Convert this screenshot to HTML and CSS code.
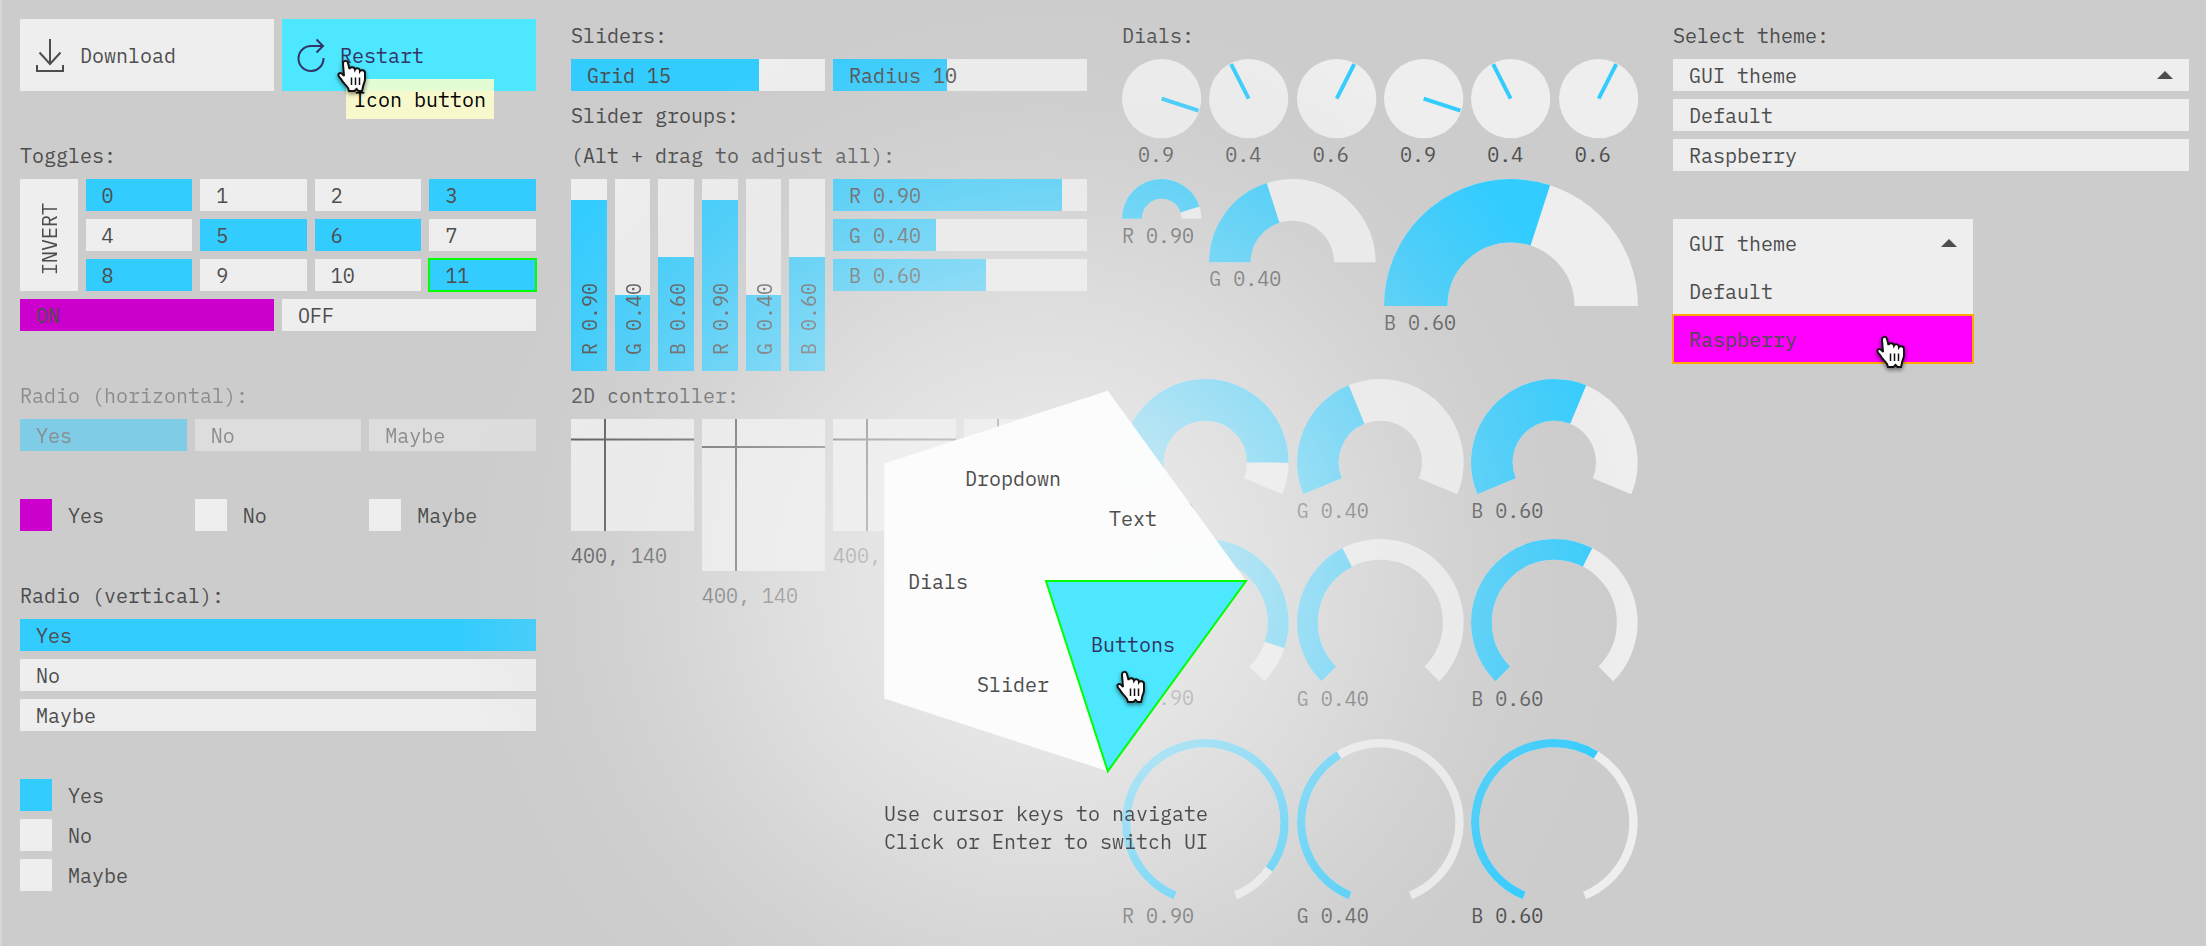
FILE: index.html
```html
<!DOCTYPE html>
<html lang="en">
<head>
<meta charset="utf-8">
<title>GUI components</title>
<link rel="stylesheet" href="styles.css">
</head>
<body>
<svg class="defs" aria-hidden="true">
  <defs>
    <path id="arc180" pathLength="100" stroke-width="50" d="M25 100A75 75 0 0 1 175 100"/>
    <path id="arc225" pathLength="100" stroke-width="50" d="M30.71 128.7A75 75 0 1 1 169.29 128.7"/>
    <path id="arc270" pathLength="100" stroke-width="25" d="M38.13 161.87A87.5 87.5 0 1 1 161.87 161.87"/>
    <path id="arc315" pathLength="100" stroke-width="10" d="M63.65 187.77A95 95 0 1 1 136.35 187.77"/>
    <symbol id="hand" viewBox="0 0 32 36">
      <path d="M8 17L7 5C7 1 11 1 12 4L13.5 10C14 7.5 18.5 7.5 19 10.5C20 8.5 24 9 24 12C25 10.5 29 11 29 14V20C29 24 27 25 27 28L26 32H22.5L20.5 30L18.5 32H13L12 29C10 26 7 24 5 20C3 18 2 16 2.5 15C4 12.5 7 15 8 17Z" fill="#fff" stroke="#111" stroke-width="2"/>
      <path d="M15.5 18.5V26M19.5 18.5V26M23.5 18.5V26" stroke="#111" stroke-width="1.5"/>
    </symbol>
  </defs>
</svg>

<main class="columns">
  <div class="column">
    <section class="stack cols-2">
      <button class="icon-button">
        <svg class="icon" viewBox="0 0 28 32"><path d="M14 0V25M3.5 13.5L14 25L24.5 13.5M1 26V32H27V26"/></svg>
        <span class="text">Download</span>
      </button>
      <div class="hovered">
        <button class="icon-button active">
          <svg class="icon narrow" viewBox="0 0 26 32"><path d="M25.5 19A12.5 12.5 0 1 1 13 7H25M18.5 .5L25 7L18.5 13.5"/></svg>
          <span class="text">Restart</span>
        </button>
        <div class="tooltip" role="tooltip">Icon button</div>
        <svg class="cursor on-button" aria-hidden="true"><use href="#hand"/></svg>
      </div>
    </section>

    <section class="stack">
      <h2 class="text">Toggles:</h2>
      <div class="toggles">
        <button class="invert"><span class="vertical">INVERT</span></button>
        <div class="stack cols-4 toggle-grid">
          <label class="bar"><input type="checkbox" checked><span class="text">0</span></label>
          <label class="bar"><input type="checkbox"><span class="text">1</span></label>
          <label class="bar"><input type="checkbox"><span class="text">2</span></label>
          <label class="bar"><input type="checkbox" checked><span class="text">3</span></label>
          <label class="bar"><input type="checkbox"><span class="text">4</span></label>
          <label class="bar"><input type="checkbox" checked><span class="text">5</span></label>
          <label class="bar"><input type="checkbox" checked><span class="text">6</span></label>
          <label class="bar"><input type="checkbox"><span class="text">7</span></label>
          <label class="bar"><input type="checkbox" checked><span class="text">8</span></label>
          <label class="bar"><input type="checkbox"><span class="text">9</span></label>
          <label class="bar"><input type="checkbox"><span class="text">10</span></label>
          <label class="bar focused"><input type="checkbox" checked><span class="text">11</span></label>
        </div>
      </div>
      <div class="stack cols-2">
        <label class="bar custom"><input type="checkbox" checked><span class="text">ON</span></label>
        <label class="bar custom"><input type="checkbox"><span class="text">OFF</span></label>
      </div>
    </section>

    <section class="stack disabled">
      <h2 class="text">Radio (horizontal):</h2>
      <div class="stack cols-3">
        <label class="bar"><input type="radio" name="horizontal" disabled checked><span class="text">Yes</span></label>
        <label class="bar"><input type="radio" name="horizontal" disabled><span class="text">No</span></label>
        <label class="bar"><input type="radio" name="horizontal" disabled><span class="text">Maybe</span></label>
      </div>
    </section>

    <section class="stack cols-3">
      <label class="square custom"><input type="radio" name="squares" checked><span class="text">Yes</span></label>
      <label class="square custom"><input type="radio" name="squares"><span class="text">No</span></label>
      <label class="square custom"><input type="radio" name="squares"><span class="text">Maybe</span></label>
    </section>

    <section class="stack">
      <h2 class="text">Radio (vertical):</h2>
      <label class="bar"><input type="radio" name="vertical" checked><span class="text">Yes</span></label>
      <label class="bar"><input type="radio" name="vertical"><span class="text">No</span></label>
      <label class="bar"><input type="radio" name="vertical"><span class="text">Maybe</span></label>
    </section>

    <section class="stack">
      <label class="square"><input type="radio" name="square-list" checked><span class="text">Yes</span></label>
      <label class="square"><input type="radio" name="square-list"><span class="text">No</span></label>
      <label class="square"><input type="radio" name="square-list"><span class="text">Maybe</span></label>
    </section>
  </div>

  <div class="column">
    <section class="stack">
      <h2 class="text">Sliders:</h2>
      <div class="stack cols-2">
        <label class="bar"><input type="range" style="--value:74%"><span class="text">Grid 15</span></label>
        <label class="bar"><input type="range" style="--value:45%"><span class="text">Radius 10</span></label>
      </div>
      <h2 class="text">Slider groups:</h2>
      <p class="text">(Alt + drag to adjust all):</p>
      <div class="stack cols-2">
        <div class="sliders-vertical">
          <label class="bar upright"><input type="range" style="--value:89%"><span class="vertical">R 0.90</span></label>
          <label class="bar upright"><input type="range" style="--value:39.6%"><span class="vertical">G 0.40</span></label>
          <label class="bar upright"><input type="range" style="--value:59.4%"><span class="vertical">B 0.60</span></label>
          <label class="bar upright"><input type="range" style="--value:89%"><span class="vertical">R 0.90</span></label>
          <label class="bar upright"><input type="range" style="--value:39.6%"><span class="vertical">G 0.40</span></label>
          <label class="bar upright"><input type="range" style="--value:59.4%"><span class="vertical">B 0.60</span></label>
        </div>
        <div class="stack">
          <label class="bar"><input type="range" style="--value:90%"><span class="text">R 0.90</span></label>
          <label class="bar"><input type="range" style="--value:40.5%"><span class="text">G 0.40</span></label>
          <label class="bar"><input type="range" style="--value:60.3%"><span class="text">B 0.60</span></label>
        </div>
      </div>
      <h2 class="text">2D controller:</h2>
      <div class="stack cols-4">
        <div class="stack"><svg class="pad"><path d="M0 20.5H999M34 0V999"/></svg><span class="text">400, 140</span></div>
        <div class="stack"><svg class="pad tall"><path d="M0 28H999M34 0V999"/></svg><span class="text">400, 140</span></div>
        <div class="stack"><svg class="pad"><path d="M0 20.5H999M34 0V999"/></svg><span class="text">400, 140</span></div>
        <div class="stack"><svg class="pad"><path d="M0 20.5H999M34 0V999"/></svg></div>
      </div>
    </section>
  </div>

  <div class="column">
    <section class="stack">
      <h2 class="text">Dials:</h2>
      <div class="stack cols-6 row-knobs">
        <label class="dial knob"><svg viewBox="0 0 80 80"><circle cx="40" cy="40" r="40"/><path d="M40 40H79" transform="rotate(18 40 40)"/></svg><input type="range"><span class="text">0.9</span></label>
        <label class="dial knob"><svg viewBox="0 0 80 80"><circle cx="40" cy="40" r="40"/><path d="M40 40H79" transform="rotate(243 40 40)"/></svg><input type="range"><span class="text">0.4</span></label>
        <label class="dial knob"><svg viewBox="0 0 80 80"><circle cx="40" cy="40" r="40"/><path d="M40 40H79" transform="rotate(297 40 40)"/></svg><input type="range"><span class="text">0.6</span></label>
        <label class="dial knob"><svg viewBox="0 0 80 80"><circle cx="40" cy="40" r="40"/><path d="M40 40H79" transform="rotate(18 40 40)"/></svg><input type="range"><span class="text">0.9</span></label>
        <label class="dial knob"><svg viewBox="0 0 80 80"><circle cx="40" cy="40" r="40"/><path d="M40 40H79" transform="rotate(243 40 40)"/></svg><input type="range"><span class="text">0.4</span></label>
        <label class="dial knob"><svg viewBox="0 0 80 80"><circle cx="40" cy="40" r="40"/><path d="M40 40H79" transform="rotate(297 40 40)"/></svg><input type="range"><span class="text">0.6</span></label>
      </div>
      <div class="stack cols-6 row-tall">
        <label class="dial"><svg viewBox="0 0 200 100"><use class="track" href="#arc180"/><use class="level" href="#arc180" style="stroke-dasharray:90 200"/></svg><input type="range"><span class="text">R 0.90</span></label>
        <label class="dial span-2"><svg viewBox="0 0 200 100"><use class="track" href="#arc180"/><use class="level" href="#arc180" style="stroke-dasharray:40 200"/></svg><input type="range"><span class="text">G 0.40</span></label>
        <label class="dial span-3"><svg viewBox="0 0 200 100"><use class="track" href="#arc180"/><use class="level" href="#arc180" style="stroke-dasharray:60 200"/></svg><input type="range"><span class="text">B 0.60</span></label>
      </div>
      <div class="stack cols-3 row-short">
        <label class="dial"><svg viewBox="0 0 200 138"><use class="track" href="#arc225"/><use class="level" href="#arc225" style="stroke-dasharray:90 200"/></svg><input type="range"><span class="text">R 0.90</span></label>
        <label class="dial"><svg viewBox="0 0 200 138"><use class="track" href="#arc225"/><use class="level" href="#arc225" style="stroke-dasharray:40 200"/></svg><input type="range"><span class="text">G 0.40</span></label>
        <label class="dial"><svg viewBox="0 0 200 138"><use class="track" href="#arc225"/><use class="level" href="#arc225" style="stroke-dasharray:60 200"/></svg><input type="range"><span class="text">B 0.60</span></label>
      </div>
      <div class="stack cols-3 row-tall">
        <label class="dial"><svg viewBox="0 0 200 171"><use class="track" href="#arc270"/><use class="level" href="#arc270" style="stroke-dasharray:90 200"/></svg><input type="range"><span class="text">R 0.90</span></label>
        <label class="dial"><svg viewBox="0 0 200 171"><use class="track" href="#arc270"/><use class="level" href="#arc270" style="stroke-dasharray:40 200"/></svg><input type="range"><span class="text">G 0.40</span></label>
        <label class="dial"><svg viewBox="0 0 200 171"><use class="track" href="#arc270"/><use class="level" href="#arc270" style="stroke-dasharray:60 200"/></svg><input type="range"><span class="text">B 0.60</span></label>
      </div>
      <div class="stack cols-3">
        <label class="dial"><svg viewBox="0 0 200 192"><use class="track" href="#arc315"/><use class="level" href="#arc315" style="stroke-dasharray:90 200"/></svg><input type="range"><span class="text">R 0.90</span></label>
        <label class="dial"><svg viewBox="0 0 200 192"><use class="track" href="#arc315"/><use class="level" href="#arc315" style="stroke-dasharray:40 200"/></svg><input type="range"><span class="text">G 0.40</span></label>
        <label class="dial"><svg viewBox="0 0 200 192"><use class="track" href="#arc315"/><use class="level" href="#arc315" style="stroke-dasharray:60 200"/></svg><input type="range"><span class="text">B 0.60</span></label>
      </div>
    </section>
  </div>

  <div class="column">
    <section class="stack">
      <h2 class="text">Select theme:</h2>
      <button class="option"><span class="text">GUI theme</span><svg class="arrow" viewBox="0 0 16 8"><path d="M0 8L8 0L16 8Z"/></svg></button>
      <button class="option"><span class="text">Default</span></button>
      <button class="option"><span class="text">Raspberry</span></button>
    </section>
    <section class="dropdown">
      <button class="option large"><span class="text">GUI theme</span><svg class="arrow" viewBox="0 0 16 8"><path d="M0 8L8 0L16 8Z"/></svg></button>
      <button class="option large"><span class="text">Default</span></button>
      <button class="option large selected"><span class="text">Raspberry</span></button>
      <svg class="cursor on-option" aria-hidden="true"><use href="#hand"/></svg>
    </section>
  </div>
</main>

<div class="fade"></div>

<nav class="radial-menu">
  <svg viewBox="0 0 400 400" aria-hidden="true">
    <path class="menu-shape" d="M400 200L261.8 9.8L38.2 82.4V317.6L261.8 390.2Z"/>
    <path class="menu-active" d="M200 200H400L261.8 390.2Z"/>
  </svg>
  <button class="item dropdown-item">Dropdown</button>
  <button class="item text-item">Text</button>
  <button class="item dials-item">Dials</button>
  <button class="item buttons-item">Buttons</button>
  <button class="item slider-item">Slider</button>
  <svg class="cursor on-menu" aria-hidden="true"><use href="#hand"/></svg>
  <p class="hint">Use cursor keys to navigate<br>Click or Enter to switch UI</p>
</nav>
</body>
</html>
```
FILE: styles.css
```css
:root {
  --bg: #ccc;
  --panel: #eee;
  --accent: #3cf;
  --hover: #4de8ff;
  --ink: #4d4d4d;
  --menu-x: 1046px;
  --menu-y: 581px;
}

* {
  box-sizing: border-box;
}

body {
  position: relative;
  min-height: 100vh;
  margin: 0;
  padding: 19px 17px 8px 18px;
  border-left: 2px solid #d6d6d6;
  background: var(--bg);
  color: var(--ink);
  font: 20px/28px "IBM Plex Mono", "Liberation Mono", monospace;
  overflow: hidden;
}

h2, p {
  margin: 0;
  font: inherit;
}

button, input {
  margin: 0;
  padding: 0;
  border: 0;
  border-radius: 0;
  font: inherit;
  color: inherit;
  text-align: left;
}

svg {
  display: block;
  overflow: visible;
}

.defs {
  position: absolute;
  width: 0;
  height: 0;
}

.columns {
  display: grid;
  grid-template-columns: repeat(4, minmax(0, 1fr));
  gap: 35px;
}

.column {
  display: flex;
  flex-direction: column;
  gap: 48px;
}

.stack {
  display: grid;
  gap: 8px;
  align-content: start;
}

.cols-2 { grid-template-columns: repeat(2, minmax(0, 1fr)); }
.cols-3 { grid-template-columns: repeat(3, minmax(0, 1fr)); }
.cols-4 { grid-template-columns: repeat(4, minmax(0, 1fr)); }
.cols-6 { grid-template-columns: repeat(6, minmax(0, 1fr)); }
.span-2 { grid-column: span 2; }
.span-3 { grid-column: span 3; }

.text {
  height: 32px;
  padding-top: 3px;
  white-space: nowrap;
}

.disabled {
  opacity: .5;
}

/* Icon buttons */
.hovered {
  position: relative;
}

.icon-button {
  display: flex;
  align-items: center;
  gap: 16px;
  width: 100%;
  height: 72px;
  padding: 0 16px;
  background: var(--panel);
}

.icon-button.active {
  background: var(--hover);
  color: #336;
}

.icon {
  width: 28px;
  height: 32px;
  fill: none;
  stroke: currentColor;
  stroke-width: 2;
}

.icon.narrow {
  width: 26px;
}

.tooltip {
  position: absolute;
  left: 64px;
  top: 60px;
  height: 40px;
  padding: 7px 8px 5px;
  background: rgb(255 255 204 / .85);
  color: #000;
  white-space: nowrap;
}

.cursor {
  position: absolute;
  width: 32px;
  height: 36px;
  filter: drop-shadow(0 2px 2px rgb(0 0 0 / .5));
}

.on-button { left: 54px; top: 40px; }
.on-option { left: 202px; top: 116px; }
.on-menu { left: 269px; top: 289px; }

/* Bars: a filled control with its caption laid over it */
.bar {
  display: grid;
}

.bar > * {
  grid-area: 1 / 1;
}

.bar > .text {
  padding-left: 16px;
  pointer-events: none;
}

.bar > input {
  appearance: none;
  width: 100%;
  height: 100%;
  background: var(--panel);
}

.bar > input:checked,
.square > input:checked {
  background: var(--accent);
}

.custom > input:checked {
  background: #c0c;
}

.focused > input {
  outline: 2px solid #0f0;
  outline-offset: -1px;
}

.bar > input[type="range"] {
  background: linear-gradient(to right, var(--accent) var(--value), var(--panel) var(--value));
}

.upright > input[type="range"] {
  background: linear-gradient(to top, var(--accent) var(--value), var(--panel) var(--value));
}

input[type="range"]::-webkit-slider-thumb {
  appearance: none;
  width: 0;
  height: 0;
}

.vertical {
  writing-mode: vertical-rl;
  transform: rotate(180deg);
  justify-self: center;
  padding: 16px 3px 0 0;
  pointer-events: none;
}

.sliders-vertical {
  display: grid;
  grid-template-columns: repeat(6, minmax(0, 1fr));
  gap: 8px;
  height: 192px;
}

.toggles {
  display: grid;
  grid-template-columns: repeat(8, minmax(0, 1fr));
  gap: 8px;
}

.toggle-grid {
  grid-column: span 7;
}

.invert {
  display: grid;
  background: var(--panel);
}

.square {
  display: flex;
  gap: 16px;
}

.square > input {
  appearance: none;
  width: 32px;
  height: 32px;
  background: var(--panel);
}

/* 2D pads */
.pad {
  width: 100%;
  height: 112px;
  overflow: hidden;
  background: var(--panel);
  stroke: var(--ink);
  stroke-width: 2;
}

.pad.tall {
  height: 152px;
}

/* Dials */
.dial {
  display: grid;
  align-content: start;
}

.dial > svg,
.dial > input {
  grid-area: 1 / 1;
  width: 100%;
}

.dial > input {
  height: 100%;
  opacity: 0;
}

.dial > .text {
  grid-area: 2 / 1;
}

.knob > .text {
  padding-left: 16px;
}

.knob circle {
  fill: var(--panel);
}

.knob path {
  stroke: var(--accent);
  stroke-width: 4;
}

.track, .level {
  fill: none;
  stroke: var(--panel);
}

.level {
  stroke: var(--accent);
}

.row-knobs { height: 112px; }
.row-tall { height: 192px; }
.row-short { height: 152px; }

/* Dropdowns */
.option {
  display: flex;
  align-items: center;
  justify-content: space-between;
  height: 32px;
  padding: 0 16px;
  background: var(--panel);
}

.option.large {
  width: 100%;
  height: 48px;
}

.option.selected {
  background: #f0f;
  outline: 2px solid #fa0;
  outline-offset: -1px;
}

.arrow {
  width: 16px;
  height: 8px;
  fill: var(--ink);
}

.dropdown {
  position: relative;
  width: 300px;
}

/* Glow behind the radial menu */
.fade {
  position: absolute;
  inset: 0;
  pointer-events: none;
  background: radial-gradient(590px circle at calc(var(--menu-x) - 2px) var(--menu-y),
    rgb(245 245 245) 0%,
    rgb(242 242 242 / .9) 10%,
    rgb(240 240 240 / .8) 20%,
    rgb(239 239 239 / .7) 30%,
    rgb(238 238 238 / .6) 40%,
    rgb(236 236 236 / .5) 50%,
    rgb(232 232 232 / .4) 60%,
    rgb(226 226 226 / .3) 70%,
    rgb(220 220 220 / .2) 80%,
    rgb(212 212 212 / .1) 90%,
    rgb(204 204 204 / 0) 100%);
}

.radial-menu {
  position: absolute;
  left: calc(var(--menu-x) - 202px);
  top: calc(var(--menu-y) - 200px);
  width: 400px;
}

.menu-shape {
  fill: rgb(252 252 252 / .98);
}

.menu-active {
  fill: var(--hover);
  stroke: #0f0;
  stroke-width: 2;
}

.item {
  position: absolute;
  transform: translate(-50%, -50%);
  padding-top: 2px;
  background: none;
}

.dropdown-item { left: 167px; top: 97px; }
.text-item { left: 287px; top: 137px; }
.dials-item { left: 92px; top: 200px; }
.slider-item { left: 167px; top: 303px; }
.buttons-item { left: 287px; top: 263px; color: #336; }

.hint {
  padding: 19px 0 0 38px;
  white-space: nowrap;
  mask-image: radial-gradient(circle at 200px -200px, #000 420px, rgb(0 0 0 / .75) 480px);
}
```
